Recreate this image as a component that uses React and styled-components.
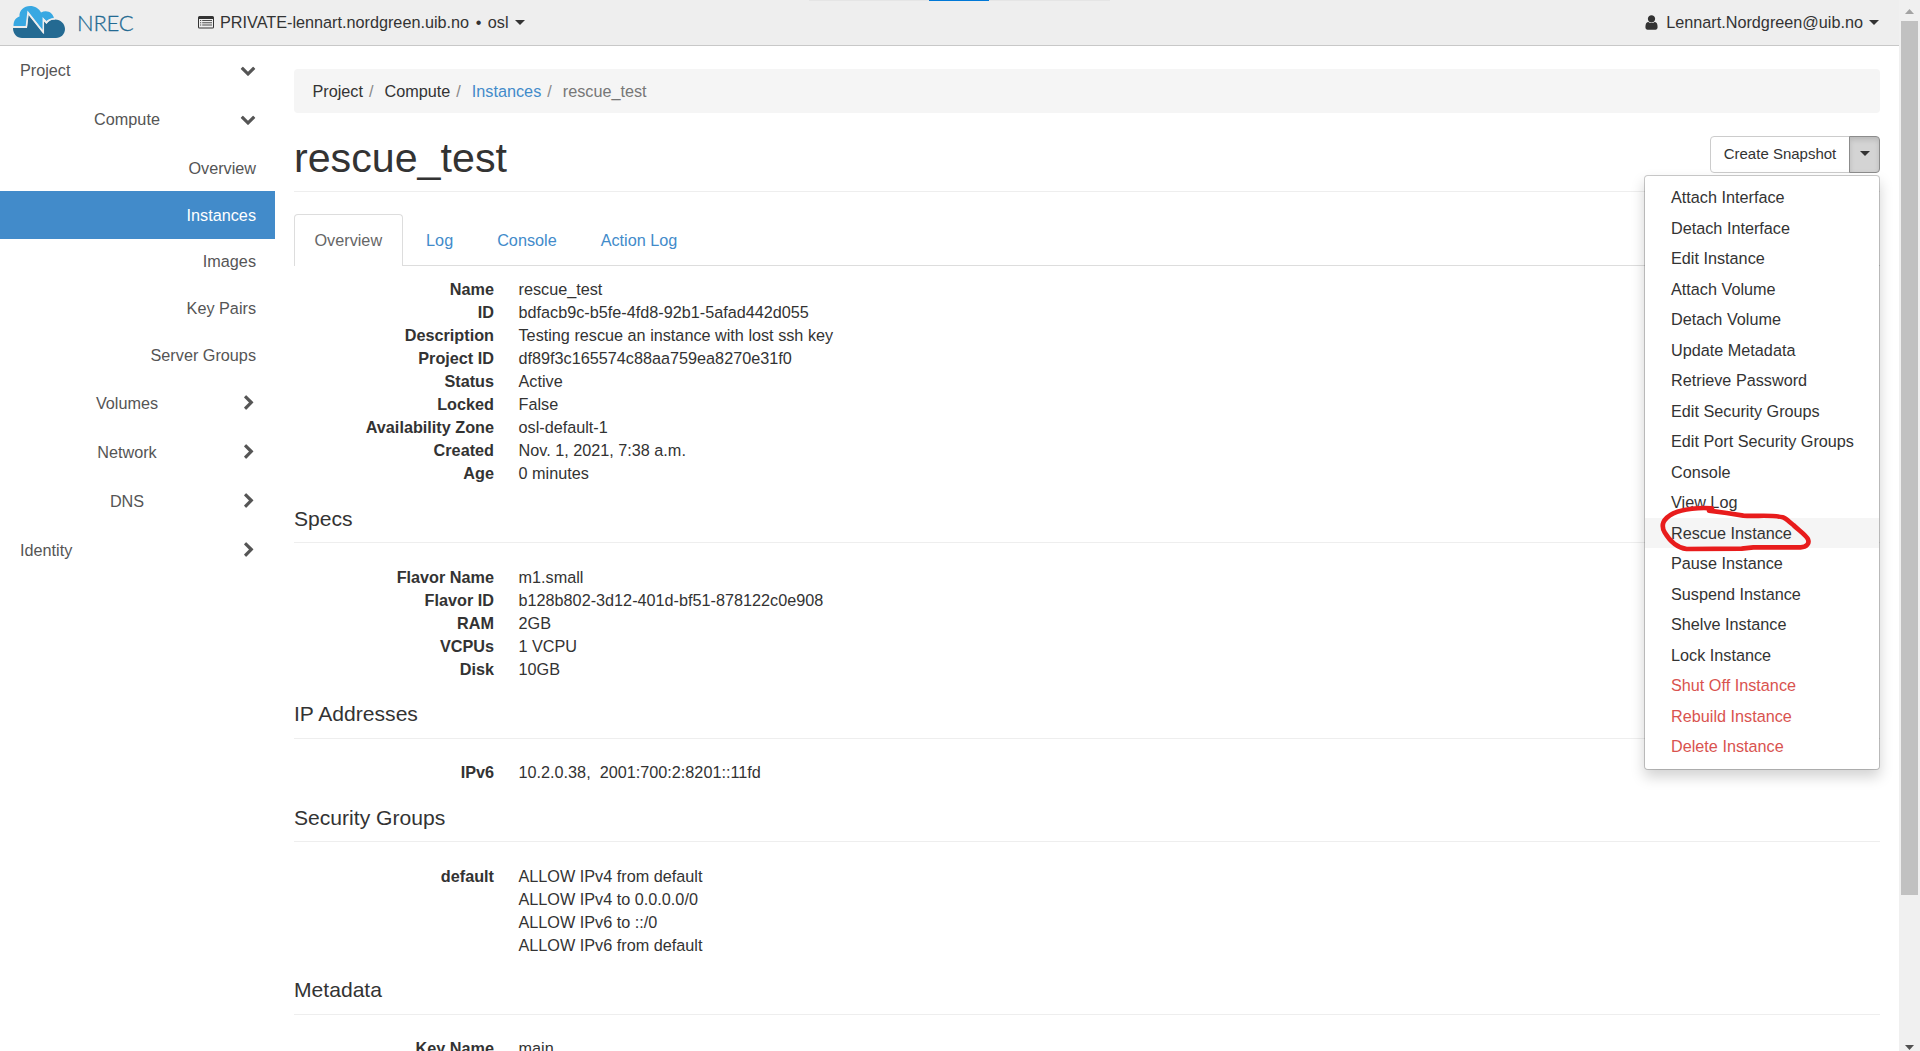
import React from "react";
import styled, { createGlobalStyle } from "styled-components";

const Global = createGlobalStyle`
  *, *::before, *::after { box-sizing: border-box; }
  html, body { margin: 0; height: 100%; overflow: hidden; background: #fff; }
  body { font: 16.23px/23px Arial, "Liberation Sans", sans-serif; color: #333; }
  ul, dl, dd, h1, h2 { margin: 0; padding: 0; }
  ul { list-style: none; }
`;

const Shell = styled.div`
  display: grid;
  grid-template-columns: minmax(0, 1fr) 21px;
  height: 1051px;
  overflow: hidden;
`;

const Page = styled.div`
  height: 1051px;
  overflow: hidden;
`;

const Header = styled.header`
  position: relative;
  display: flex;
  align-items: center;
  height: 46px;
  padding: 0 20px 1px 13px;
  background: #eee;
  border-bottom: 1px solid #c8c8c8;
`;

const TopStrip = styled.div`
  position: absolute;
  top: 0;
  left: 809px;
  width: 301px;
  height: 1px;
  background: #e5e5e5;
  display: flex;
  padding-left: 120px;
  &::after { content: ""; width: 60px; background: #0078d7; }
`;

const Brand = styled.div`
  display: flex;
  align-items: center;
  width: 185px;
`;

const BrandName = styled.span`
  margin: 1px 0 0 12px;
  font: 300 22px/26px Lato, sans-serif;
  letter-spacing: -0.2px;
  color: #246a92;
  -webkit-text-stroke: 0.3px #246a92;
`;

const NavLink = styled.div`
  display: flex;
  align-items: center;
  margin-left: ${(p) => (p.$end ? "auto" : "0")};
  white-space: pre;
`;

const Label = styled.span`
  margin: 0 6px;
`;

const Bullet = styled.span`
  margin: 0 2px;
`;

const Caret = styled.span`
  border: ${(p) => p.$size || 5}px solid transparent;
  border-top-color: #333;
  border-bottom: 0;
`;

const Body = styled.div`
  display: grid;
  grid-template-columns: 275px minmax(0, 1fr);
`;

const NavGroup = styled.div`
  display: grid;
  grid-template-columns: 1fr 16px;
  align-items: center;
  height: 49px;
  padding: 0 19px 0 20px;
  color: #555;
  svg {
    justify-self: end;
    margin: ${(p) => (p.$open ? "0 0 1px" : "0 -1px 0 0")};
  }
`;

const GroupName = styled.span`
  text-align: ${(p) => (p.$nested ? "center" : "left")};
  padding-right: ${(p) => (p.$nested ? "6px" : "0")};
`;

const NavItem = styled.div`
  display: flex;
  align-items: center;
  justify-content: flex-end;
  height: ${(p) => (p.$active ? 48 : p.$first ? 47 : 46.67)}px;
  padding: ${(p) => (p.$active ? "0 19px 0 0" : p.$first ? "2px 19px 0 0" : "0 19px 1px 0")};
  color: ${(p) => (p.$active ? "#fff" : "#555")};
  background: ${(p) => (p.$active ? "#428bca" : "transparent")};
`;

const Main = styled.main`
  padding: 23px 19px 0;
`;

const Crumbs = styled.ul`
  display: flex;
  height: 44px;
  padding: 11px 18.5px;
  border-radius: 4px;
  background: #f5f5f5;
`;

const Crumb = styled.li`
  color: ${(p) => (p.$link ? "#428bca" : p.$last ? "#777" : "#333")};
  &:not(:first-child)::before { content: "/"; padding: 0 11px 0 6px; color: #888; }
`;

const TitleBar = styled.div`
  display: flex;
  justify-content: space-between;
  height: 79px;
  padding-top: 23px;
  border-bottom: 1px solid #eee;
`;

const Title = styled.h1`
  font-size: 41.2px;
  font-weight: 400;
  line-height: 45px;
`;

const Actions = styled.div`
  position: relative;
  display: flex;
  height: 37px;
`;

const Button = styled.button`
  width: 140px;
  padding: 0 0 2px;
  font: 15px/22px Arial, "Liberation Sans", sans-serif;
  color: #333;
  background: #fff;
  border: 1px solid #ccc;
  border-radius: 4px 0 0 4px;
`;

const Toggle = styled.button`
  display: flex;
  align-items: center;
  justify-content: center;
  width: 31px;
  margin-left: -1px;
  padding: 0 0 2px;
  background: #d4d4d4;
  border: 1px solid #8c8c8c;
  border-radius: 0 4px 4px 0;
  box-shadow: inset 0 3px 5px rgba(0, 0, 0, 0.125);
`;

const Menu = styled.ul`
  position: absolute;
  top: 39px;
  right: 0;
  z-index: 10;
  width: 236px;
  height: 595px;
  padding: 6px 0;
  background: #fff;
  border: 1px solid rgba(0, 0, 0, 0.2);
  border-radius: 4px;
  background-clip: padding-box;
  box-shadow: 0 7px 14px rgba(0, 0, 0, 0.175);
`;

const MenuItem = styled.li`
  position: relative;
  height: 30.5px;
  padding: 3px 0 0 26px;
  line-height: 24px;
  color: ${(p) => (p.$danger ? "#d9534f" : "#333")};
  background: ${(p) => (p.$hover ? "#f5f5f5" : "none")};
`;

const Scribble = styled.svg`
  position: absolute;
  z-index: 1;
  left: 1px;
  top: -18px;
  width: 170px;
  height: 57px;
`;

const Tabs = styled.div`
  display: flex;
  height: 52px;
  margin-top: 22px;
  border-bottom: 1px solid #ddd;
`;

const Tab = styled.div`
  height: 52px;
  margin-right: 3px;
  padding: 14px 19.5px 0;
  color: ${(p) => (p.$active ? "#666" : "#428bca")};
  border: 1px solid ${(p) => (p.$active ? "#ddd" : "transparent")};
  border-bottom: 0;
  border-radius: 4px 4px 0 0;
  background: ${(p) => (p.$active ? "#fff" : "none")};
`;

const SectionTitle = styled.h2`
  height: ${(p) => p.$height}px;
  padding-top: ${(p) => p.$top || 20}px;
  font-size: 21.1px;
  font-weight: 400;
  line-height: 23px;
  border-bottom: 1px solid #eee;
`;

const Details = styled.dl`
  display: grid;
  grid-template-columns: 200px 1fr;
  column-gap: 24.5px;
  padding: ${(p) => p.$top}px 0 ${(p) => (p.$top === 22 ? 1 : 0)}px;
`;

const Term = styled.dt`
  font-weight: 700;
  text-align: right;
`;

const Value = styled.dd`
  grid-column: 2;
  white-space: pre;
`;

const Scrollbar = styled.div`
  display: flex;
  flex-direction: column;
  align-items: center;
  padding: 9px 1px 1px 0;
  background: #f0f0f0;
`;

const Thumb = styled.div`
  width: 17px;
  height: 874px;
  margin: 7px 0 auto;
  background: #c1c1c1;
`;

const CHEVRONS = {
  down: "M1683 808l-742 741q-19 19-45 19t-45-19l-742-741q-19-19-19-45.5t19-45.5l166-165q19-19 45-19t45 19l531 531 531-531q19-19 45-19t45 19l166 165q19 19 19 45.5t-19 45.5z",
  right: "M1363 877l-742 742q-19 19-45 19t-45-19l-166-166q-19-19-19-45t19-45l531-531-531-531q-19-19-19-45t19-45l166-166q19-19 45-19t45 19l742 742q19 19 19 45t-19 45z",
};

const Chevron = ({ dir }) => (
  <svg width="16" height="16" viewBox="0 0 1792 1792" fill="#555">
    <path d={CHEVRONS[dir]} />
  </svg>
);

const Cloud = () => (
  <svg width="52" height="32" viewBox="0 0 52 32">
    <path fill="#38a8e2" d="M0.500 20C0.500 14.500 3 11.500 6.500 10.500C6 4.500 11 0 17 0C22 0 26 2.500 28 6.500C34 3.500 40 6.500 41 12.500C38 12.500 36 13 33.500 15L30 12V25L15 6L13 20Z" />
    <path fill="#246a92" d="M0 22H14L15.500 9L30.500 28V15L33.500 18C35 15.500 38 13.500 42 13.500C48 13.500 52 18 52 23C52 28 48 32 43 32H9C4 32 0 28 0 22Z" />
    <path fill="none" stroke="#eee" strokeWidth="1.500" d="M0 21H13.300L15 6.500L30.300 26V13L33.500 16.500C35.500 14 38.500 12.800 42 12.800" />
  </svg>
);

const ListIcon = () => (
  <svg width="16" height="16" viewBox="0 0 16 16" fill="#333">
    <path fillRule="evenodd" d="M1.500 2h13q1.500 0 1.500 1.500v9.500q0 1.500-1.500 1.500h-13q-1.500 0-1.500-1.500v-9.500q0-1.500 1.500-1.500zM1 5v8q0 .5.500.5h13q.5 0 .5-.5v-8z" />
    <path fillOpacity=".85" d="M2 6h1.200v1H2zM4.200 6h9.800v1H4.200zM2 8.300h1.200v1H2zM4.200 8.300h9.800v1H4.200zM2 10.600h1.200v1H2zM4.200 10.600h9.800v1H4.200z" />
  </svg>
);

const UserIcon = () => (
  <svg width="17" height="17" viewBox="0 0 1792 1792" fill="#333">
    <path d="M1536 1399q0 109-62.500 187t-150.500 78h-854q-88 0-150.500-78t-62.500-187q0-85 8.500-160.500t31.500-152 58.500-131 94-89 134.500-34.500q131 128 313 128t313-128q76 0 134.500 34.500t94 89 58.500 131 31.500 152 8.500 160.500zm-256-887q0 159-112.500 271.500t-271.500 112.500-271.500-112.500-112.500-271.500 112.500-271.500 271.500-112.500 271.500 112.500 112.500 271.500z" />
  </svg>
);

const NAV = [
  { name: "Project", dir: "down" },
  { name: "Compute", dir: "down", nested: true },
  { item: "Overview", first: true },
  { item: "Instances", active: true },
  { item: "Images" },
  { item: "Key Pairs" },
  { item: "Server Groups" },
  { name: "Volumes", dir: "right", nested: true },
  { name: "Network", dir: "right", nested: true },
  { name: "DNS", dir: "right", nested: true },
  { name: "Identity", dir: "right" },
];

const MENU = [
  "Attach Interface", "Detach Interface", "Edit Instance", "Attach Volume",
  "Detach Volume", "Update Metadata", "Retrieve Password", "Edit Security Groups",
  "Edit Port Security Groups", "Console", "View Log", "Rescue Instance",
  "Pause Instance", "Suspend Instance", "Shelve Instance", "Lock Instance",
  "Shut Off Instance", "Rebuild Instance", "Delete Instance",
];

const SECTIONS = [
  {
    top: 12,
    rows: [
      ["Name", "rescue_test"],
      ["ID", "bdfacb9c-b5fe-4fd8-92b1-5afad442d055"],
      ["Description", "Testing rescue an instance with lost ssh key"],
      ["Project ID", "df89f3c165574c88aa759ea8270e31f0"],
      ["Status", "Active"],
      ["Locked", "False"],
      ["Availability Zone", "osl-default-1"],
      ["Created", "Nov. 1, 2021, 7:38 a.m."],
      ["Age", "0 minutes"],
    ],
  },
  {
    title: "Specs",
    height: 58,
    titleTop: 22,
    top: 23,
    rows: [
      ["Flavor Name", "m1.small"],
      ["Flavor ID", "b128b802-3d12-401d-bf51-878122c0e908"],
      ["RAM", "2GB"],
      ["VCPUs", "1 VCPU"],
      ["Disk", "10GB"],
    ],
  },
  { title: "IP Addresses", height: 58, titleTop: 21, top: 22, rows: [["IPv6", "10.2.0.38,  2001:700:2:8201::11fd"]] },
  {
    title: "Security Groups",
    height: 57,
    titleTop: 21,
    top: 23,
    rows: [
      ["default", "ALLOW IPv4 from default"],
      ["", "ALLOW IPv4 to 0.0.0.0/0"],
      ["", "ALLOW IPv6 to ::/0"],
      ["", "ALLOW IPv6 from default"],
    ],
  },
  { title: "Metadata", height: 58, titleTop: 21, top: 22, rows: [["Key Name", "main"]] },
];

export default function App() {
  return (
    <Shell>
      <Global />
      <Page>
        <Header>
          <TopStrip />
          <Brand>
            <Cloud />
            <BrandName>NREC</BrandName>
          </Brand>
          <NavLink>
            <ListIcon />
            <Label>PRIVATE-lennart.nordgreen.uib.no <Bullet>•</Bullet> osl</Label>
            <Caret />
          </NavLink>
          <NavLink $end>
            <UserIcon />
            <Label>Lennart.Nordgreen@uib.no</Label>
            <Caret />
          </NavLink>
        </Header>
        <Body>
          <nav>
            {NAV.map((n) =>
              n.item ? (
                <NavItem key={n.item} $active={n.active} $first={n.first}>{n.item}</NavItem>
              ) : (
                <NavGroup key={n.name} $open={n.dir === "down"}>
                  <GroupName $nested={n.nested}>{n.name}</GroupName>
                  <Chevron dir={n.dir} />
                </NavGroup>
              )
            )}
          </nav>
          <Main>
            <Crumbs>
              <Crumb>Project</Crumb>
              <Crumb>Compute</Crumb>
              <Crumb $link>Instances</Crumb>
              <Crumb $last>rescue_test</Crumb>
            </Crumbs>
            <TitleBar>
              <Title>rescue_test</Title>
              <Actions>
                <Button>Create Snapshot</Button>
                <Toggle><Caret /></Toggle>
                <Menu>
                  {MENU.map((m, i) => (
                    <MenuItem key={m} $danger={i > 15} $hover={i === 11}>
                      {m}
                      {i === 11 && (
                        <Scribble viewBox="78 120 510 171" fill="none" stroke="#e81c1c" strokeWidth="14" strokeLinecap="round" strokeLinejoin="round">
                          <path d="M276 145C240 142 190 146 160 160C128 176 122 196 134 217C147 239 170 263 200 267L365 266L400 262H542C560 262 569 250 564 238C558 225 535 210 520 195C508 186 497 174 488 172C450 163 410 170 370 167L320 159L267 152" />
                        </Scribble>
                      )}
                    </MenuItem>
                  ))}
                </Menu>
              </Actions>
            </TitleBar>
            <Tabs>
              <Tab $active>Overview</Tab>
              <Tab>Log</Tab>
              <Tab>Console</Tab>
              <Tab>Action Log</Tab>
            </Tabs>
            {SECTIONS.map((s, i) => (
              <section key={i}>
                {s.title && <SectionTitle $height={s.height} $top={s.titleTop}>{s.title}</SectionTitle>}
                <Details $top={s.top}>
                  {s.rows.map(([k, v]) => (
                    <React.Fragment key={v}>
                      {k && <Term>{k}</Term>}
                      <Value>{v}</Value>
                    </React.Fragment>
                  ))}
                </Details>
              </section>
            ))}
          </Main>
        </Body>
      </Page>
      <Scrollbar>
        <svg width="9" height="5" viewBox="0 0 9 5"><path fill="#a3a3a3" d="M4.500 0L9 5H0z" /></svg>
        <Thumb />
        <svg width="9" height="5" viewBox="0 0 9 5"><path fill="#505050" d="M0 0h9L4.500 5z" /></svg>
      </Scrollbar>
    </Shell>
  );
}
